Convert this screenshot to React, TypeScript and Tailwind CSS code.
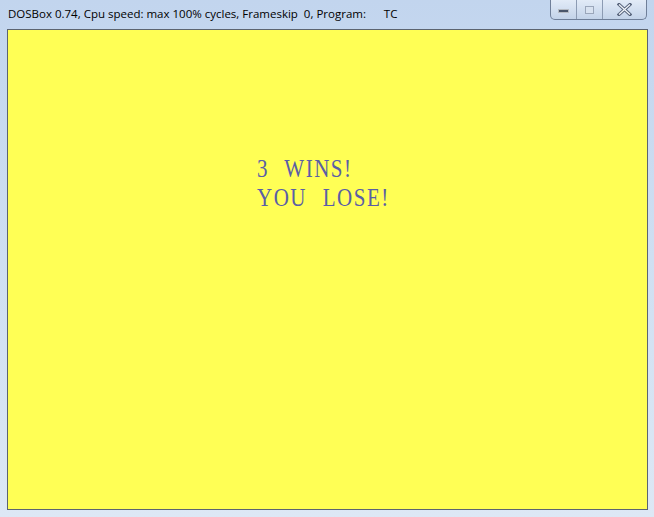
import React from "react";

export default function App() {
  return (
    <div className="w-[654px] h-[517px] overflow-hidden bg-gradient-to-b from-[#c2d5ee] via-[#cfdff2] to-[#dde8f5] flex flex-col relative">
      <div className="h-[29px] flex items-start shrink-0 relative">
        <div
          className="pl-[8px] pt-[5px] text-[11.5px] text-black whitespace-pre"
          style={{ fontFamily: '"Open Sans", "Noto Sans", sans-serif' }}
        >
          {"DOSBox 0.74, Cpu speed: max 100% cycles, Frameskip  0, Program:      TC"}
        </div>
        <div className="absolute right-[7px] top-0 flex h-[20px] border border-t-0 border-[#6f7f99] rounded-b-[5px] overflow-hidden bg-gradient-to-b from-[#e2ebf7] to-[#c3d3e9]">
          <div className="w-[26px] flex items-center justify-center border-r border-[#8c9bb3]">
            <div className="w-[11px] h-[4px] bg-[#4a566b] border border-white/60 mt-[3px]" />
          </div>
          <div className="w-[26px] flex items-center justify-center border-r border-[#8c9bb3]">
            <div className="w-[9px] h-[8px] border border-[#9aa6ba] bg-[#d8e2f0]" />
          </div>
          <div className="w-[43px] flex items-center justify-center">
            <svg width="15" height="13" viewBox="0 0 15 13">
              <path d="M2 1.5 L13 11.5 M13 1.5 L2 11.5" stroke="#56627a" strokeWidth="3.2" strokeLinecap="square" />
              <path d="M2 1.5 L13 11.5 M13 1.5 L2 11.5" stroke="#f2f6fb" strokeWidth="1.2" />
            </svg>
          </div>
        </div>
      </div>
      <div className="ml-[7px] w-[641px] h-[481px] border border-[#5c6470] bg-[#ffff55] flex flex-col">
        <div
          className="pt-[123px] pl-[249px] text-[#5a5ea6] text-[21px] leading-[29px] tracking-[1.5px] [word-spacing:9px] whitespace-pre"
          style={{ fontFamily: '"Liberation Serif", serif' }}
        >
          <div className="scale-y-[1.15] origin-top-left">3 WINS!</div>
          <div className="scale-y-[1.15] origin-top-left">YOU LOSE!</div>
        </div>
      </div>
    </div>
  );
}
